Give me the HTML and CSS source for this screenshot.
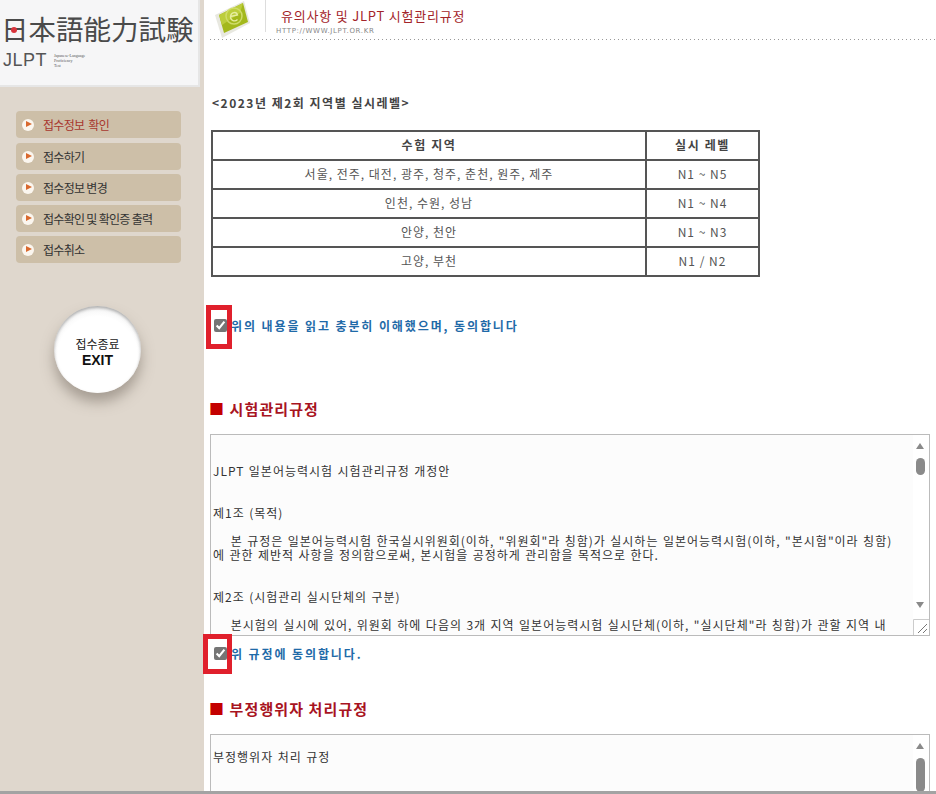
FILE: index.html
```html
<!DOCTYPE html>
<html>
  <head>
    <title>JLPT 시험관리규정</title>
    <link rel="stylesheet" href="styles.css">
  </head>
  <body>
    <div class="page">
      <aside class="sidebar">
        <div class="logo">
          <div class="logo-kanji"><span class="logo-dot"></span>日本語能力試験</div>
          <div class="logo-sub">
            <span class="logo-jlpt">JLPT</span>
            <span class="logo-small">Japanese-Language<br>Proficiency<br>Test</span>
          </div>
        </div>
        <ul class="menu">
          <li class="menu-item active"><span class="bullet"></span>접수정보&nbsp; 확인</li>
          <li class="menu-item"><span class="bullet"></span>접수하기</li>
          <li class="menu-item"><span class="bullet"></span>접수정보 변경</li>
          <li class="menu-item"><span class="bullet"></span>접수확인 및 확인증 출력</li>
          <li class="menu-item"><span class="bullet"></span>접수취소</li>
        </ul>
        <div class="exit-button">
          <span class="exit-ko">접수종료</span>
          <span class="exit-en">EXIT</span>
        </div>
      </aside>
      <main class="content">
        <header class="top">
          <svg class="top-icon" width="38" height="40" viewBox="0 0 38 40">
            <path d="M1 15 L30 1 L36 23 L8 38 Z" fill="#e8e8e0"/>
            <path d="M5 15 L29 3 L34 22 L10 33 Z" fill="#a3b81c"/>
            <path d="M5 15 L29 3 L26 13 L8 25 Z" fill="#bccd3c"/>
            <circle cx="20" cy="16" r="8" fill="none" stroke="#cfdc6a" stroke-width="1.500"/>
            <path d="M16.500 16.500 L23.500 15 C22.500 11 17 12 16.500 16.500 C16.500 21 21 22 23.500 19.500" fill="none" stroke="#e6edA0" stroke-width="1.400"/>
          </svg>
          <div class="top-divider"></div>
          <div class="top-text">
            <div class="top-title">유의사항 및 JLPT 시험관리규정</div>
            <div class="top-url">HTTP://WWW.JLPT.OR.KR</div>
          </div>
        </header>

        <h3 class="level-title">&lt;2023년 제2회 지역별 실시레벨&gt;</h3>
        <table class="levels">
          <tr>
            <th>수험 지역</th>
            <th class="level-col">실시 레벨</th>
          </tr>
          <tr>
            <td>서울, 전주, 대전, 광주, 청주, 춘천, 원주, 제주</td>
            <td>N1 ~ N5</td>
          </tr>
          <tr>
            <td>인천, 수원, 성남</td>
            <td>N1 ~ N4</td>
          </tr>
          <tr>
            <td>안양, 천안</td>
            <td>N1 ~ N3</td>
          </tr>
          <tr>
            <td>고양, 부천</td>
            <td>N1 / N2</td>
          </tr>
        </table>

        <label class="agree agree-first">
          <span class="mark mark-first"></span>
          <input type="checkbox" checked>
          <span>위의 내용을 읽고 충분히 이해했으며, 동의합니다</span>
        </label>

        <h2 class="section-title first-section"><span class="square">■</span> 시험관리규정</h2>
        <div class="terms">
          <div class="terms-text">

JLPT 일본어능력시험 시험관리규정 개정안


제1조 (목적)

    본 규정은 일본어능력시험 한국실시위원회(이하, "위원회"라 칭함)가 실시하는 일본어능력시험(이하, "본시험"이라 칭함)
에 관한 제반적 사항을 정의함으로써, 본시험을 공정하게 관리함을 목적으로 한다.


제2조 (시험관리 실시단체의 구분)

    본시험의 실시에 있어, 위원회 하에 다음의 3개 지역 일본어능력시험 실시단체(이하, "실시단체"라 칭함)가 관할 지역 내</div>
          <div class="scrollbar">
            <span class="arrow-up"></span>
            <span class="thumb"></span>
            <span class="arrow-down"></span>
          </div>
          <svg class="resizer" width="16" height="16" viewBox="0 0 16 16">
            <path d="M0.500 16 V0.500 H16" fill="none" stroke="#ccc"/>
            <path d="M5 14 L14 5 M10 14 L14 10" stroke="#777"/>
          </svg>
        </div>

        <label class="agree agree-second">
          <span class="mark mark-second"></span>
          <input type="checkbox" checked>
          <span>위 규정에 동의합니다.</span>
        </label>

        <h2 class="section-title second-section"><span class="square">■</span> 부정행위자 처리규정</h2>
        <div class="terms terms-cut">
          <div class="terms-text">
부정행위자 처리 규정</div>
          <div class="scrollbar">
            <span class="arrow-up"></span>
            <span class="thumb thumb-long"></span>
          </div>
        </div>
      </main>
    </div>
    <div class="window-edge"></div>
  </body>
</html>
```
FILE: styles.css
```css
html, body {
  margin: 0;
  height: 794px;
  overflow: hidden;
  background-color: white;
}
body {
  font-family: "Noto Sans CJK KR", "Liberation Sans", sans-serif;
  font-size: 12px;
  color: #333;
}
.page {
  display: flex;
  height: 791px;
  overflow: hidden;
}

/* left column */
.sidebar {
  width: 204px;
  flex-shrink: 0;
  background-color: #dfd7cd;
}
.logo {
  width: 200px;
  height: 87px;
  box-sizing: border-box;
  padding: 8px 0 0 1px;
  background-color: #f6f6f7;
  border-right: 2px solid #e6e6e6;
  border-bottom: 2px solid #e6e6e6;
  overflow: hidden;
}
.logo-kanji {
  position: relative;
  font-family: "Noto Sans CJK JP", sans-serif;
  font-size: 27.500px;
  line-height: 40px;
  color: #4a4a4a;
  white-space: nowrap;
}
.logo-dot {
  position: absolute;
  left: 10px;
  top: 19px;
  width: 6px;
  height: 6px;
  border-radius: 50%;
  background-color: #d8343c;
}
.logo-sub {
  display: flex;
  align-items: center;
  gap: 7px;
  margin: 1px 0 0 2px;
}
.logo-jlpt {
  font-family: "Liberation Sans", sans-serif;
  font-size: 18px;
  line-height: 22px;
  letter-spacing: 0.500px;
  color: #555;
}
.logo-small {
  font-family: "Liberation Serif", serif;
  font-size: 4px;
  line-height: 5px;
  color: #555;
}
.menu {
  list-style: none;
  margin: 24px 0 0 16px;
  padding: 0;
  width: 165px;
  display: flex;
  flex-direction: column;
  gap: 4px;
}
.menu-item {
  display: flex;
  align-items: center;
  height: 27px;
  padding-left: 6px;
  box-sizing: border-box;
  background-color: #cdbfa8;
  border-radius: 4px;
  font-size: 12px;
  letter-spacing: -0.700px;
  color: #333;
}
.menu-item.active {
  margin-bottom: 1px;
  color: #a8382f;
}
.bullet {
  position: relative;
  width: 12px;
  height: 12px;
  margin-right: 9px;
  border-radius: 50%;
  background-color: #fbf6ef;
}
.bullet::after {
  content: "";
  position: absolute;
  left: 4px;
  top: 2.500px;
  border-left: 6px solid #d9692f;
  border-top: 3.500px solid transparent;
  border-bottom: 3.500px solid transparent;
}
.exit-button {
  width: 87px;
  height: 87px;
  margin: 43px 0 0 54px;
  box-sizing: border-box;
  padding-top: 30px;
  border-radius: 50%;
  display: flex;
  flex-direction: column;
  align-items: center;
  background: radial-gradient(circle at 50% 58%, #fff 0, #fff 60%, #f0f0f0 80%, #d4d4d4 100%);
  box-shadow: inset 0 2px 3px rgba(130, 130, 130, 0.6), 0 9px 13px rgba(110, 100, 90, 0.5);
  color: #222;
}
.exit-ko {
  font-size: 12px;
  line-height: 16px;
}
.exit-en {
  font-family: "Liberation Sans", sans-serif;
  font-size: 14px;
  font-weight: bold;
  line-height: 16px;
  color: #111;
}

/* right column */
.content {
  position: relative;
  flex: 1;
  min-width: 0;
  padding-left: 7px;
}
.top {
  display: flex;
  height: 40px;
  margin-left: -1px;
  background-image: linear-gradient(to right, #999 1px, transparent 1px);
  background-size: 4px 1px;
  background-repeat: repeat-x;
  background-position: left bottom;
}
.top-icon {
  margin-left: 4px;
  flex-shrink: 0;
}
.top-divider {
  width: 1px;
  height: 32px;
  margin-left: 13px;
  background-color: #ddd;
}
.top-text {
  margin-left: 10px;
}
.top-title {
  margin: 6px 0 0 5px;
  font-size: 13px;
  line-height: 20px;
  letter-spacing: 0.800px;
  color: #a3242a;
}
.top-url {
  font-family: "DejaVu Sans", sans-serif;
  font-size: 7px;
  line-height: 11px;
  letter-spacing: 0.650px;
  color: #888;
}
.level-title {
  margin: 54px 0 0 1px;
  font-size: 12px;
  line-height: 18px;
  font-weight: bold;
  color: #444;
  letter-spacing: 1.500px;
}
.levels {
  margin-top: 18px;
  width: 549px;
  border-collapse: collapse;
  border: 2px solid #555;
}
.levels th, .levels td {
  height: 24px;
  padding: 0 0 3px;
  text-align: center;
  border: 2px solid #555;
  font-size: 12px;
  letter-spacing: 1px;
  color: #555;
  font-weight: normal;
}
.levels th {
  font-weight: bold;
  letter-spacing: 1.600px;
  color: #444;
}
.levels th.level-col {
  width: 111px;
}
.agree {
  display: flex;
  align-items: center;
  font-size: 12px;
  font-weight: bold;
  color: #1f6aa8;
  letter-spacing: 1.900px;
  margin-left: 3px;
}
.agree input {
  width: 13px;
  height: 13px;
  margin: 0 4px 0 0;
  accent-color: #757575;
}
.agree-first {
  margin-top: 40px;
}
.agree-second {
  margin-top: 9px;
}
.mark {
  position: absolute;
  box-sizing: border-box;
  border: 5px solid #e0202c;
}
.mark-first {
  left: 2px;
  top: 305px;
  width: 26px;
  height: 44px;
}
.mark-second {
  left: -1px;
  top: 634px;
  width: 29px;
  height: 40px;
}
.section-title {
  margin: 0 0 0 -2px;
  font-size: 15px;
  line-height: 20px;
  font-weight: bold;
  color: #a8141f;
  letter-spacing: 1.100px;
}
.square {
  color: #c40000;
}
.first-section {
  margin-top: 65px;
}
.second-section {
  margin-top: 37px;
}
.terms {
  position: relative;
  display: flex;
  width: 720px;
  height: 202px;
  box-sizing: border-box;
  margin: 15px 0 0 -1px;
  background-color: #fcfcfc;
  border: 1px solid #bbb;
  overflow: hidden;
}
.terms-cut {
  height: 70px;
  border-bottom: 0;
}
.terms-text {
  flex: 1;
  padding: 1px 0 0 2px;
  font-size: 12px;
  line-height: 14px;
  letter-spacing: 1px;
  word-spacing: 0.750px;
  white-space: pre;
  overflow: hidden;
  color: #333;
}
.scrollbar {
  position: relative;
  width: 16px;
  flex-shrink: 0;
  background-color: white;
}
.arrow-up, .arrow-down {
  position: absolute;
  left: 3px;
  width: 0;
  border-left: 4.500px solid transparent;
  border-right: 4.500px solid transparent;
}
.arrow-up {
  top: 8px;
  border-bottom: 6px solid #8a8a8a;
}
.arrow-down {
  top: 167px;
  border-top: 6px solid #8a8a8a;
}
.thumb {
  position: absolute;
  left: 3px;
  top: 23px;
  width: 9px;
  height: 17px;
  border-radius: 5px;
  background-color: #8a8a8a;
}
.thumb-long {
  height: 34px;
}
.resizer {
  position: absolute;
  right: 0;
  bottom: 0;
  background-color: white;
}
.window-edge {
  height: 3px;
  background-color: #a3a3a3;
}
```
